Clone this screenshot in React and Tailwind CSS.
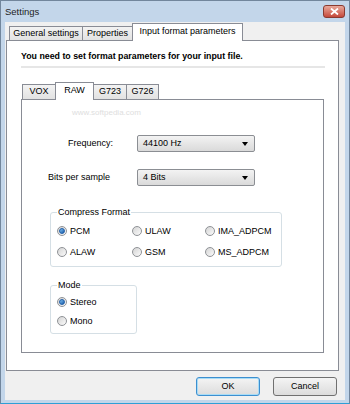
import React from 'react';

const Radio = ({ checked, label }) => (
  <div className="flex items-center h-[14px] gap-[3px]">
    <span className="w-[10px] h-[10px] rounded-full border border-[#8f9296] bg-gradient-to-br from-[#d4d4d4] to-[#fbfbfb] flex items-center justify-center">
      {checked && (
        <span className="w-[6px] h-[6px] rounded-full bg-gradient-to-br from-[#7fc2f2] to-[#185aa8] border border-[#1f5ea8]" />
      )}
    </span>
    <span>{label}</span>
  </div>
);

const Select = ({ value }) => (
  <div className="w-[118px] h-[17px] rounded-[2px] border border-[#8b8e93] bg-gradient-to-b from-[#f3f3f3] to-[#dadada] flex items-center justify-between pl-[5px] pr-[6px]">
    <span>{value}</span>
    <span className="w-0 h-0 border-l-[3.5px] border-r-[3.5px] border-t-[4px] border-l-transparent border-r-transparent border-t-black" />
  </div>
);

const Tab = ({ label, width, active, small }) => (
  <div
    className={`${width} -ml-[1px] first:ml-0 border border-[#898c95] border-b-0 flex items-start justify-center ${
      active
        ? 'bg-white h-[18px] relative z-10 -mb-[1px] pt-[2px]'
        : `bg-gradient-to-b from-[#f3f3f3] to-[#e2e2e2] ${small ? 'h-[15px]' : 'h-[14px]'} pt-[1px]`
    }`}
  >
    {label}
  </div>
);

const Button = ({ label, focused }) => (
  <div
    className={`w-[64px] h-[19px] rounded-[3px] border flex items-center justify-center bg-gradient-to-b from-[#f4f4f4] to-[#dcdcdc] ${
      focused ? 'border-[#3c8fd0] shadow-[inset_0_0_0_1px_#a8dcf6]' : 'border-[#707070]'
    }`}
  >
    {label}
  </div>
);

export default function App() {
  return (
    <div className="w-[350px] h-[404px] flex flex-col bg-[#c3d6ea] border border-[#72869c] border-b-[#2f9fd6] font-['Liberation_Sans',Arial,sans-serif] text-[9px] leading-[11px] text-black">
      {/* Title bar */}
      <div className="h-[21px] flex items-center justify-between pl-[4px] pr-[4px]">
        <span className="text-[9.5px] text-[#1e1e1e]">Settings</span>
        <div className="w-[22px] h-[13px] rounded-[3px] border border-[#8a3a30] bg-gradient-to-b from-[#e8a89c] to-[#c4473a] flex items-center justify-center">
          <svg width="9" height="7" viewBox="0 0 9 7">
            <path d="M1 0.5 L8 6.5 M8 0.5 L1 6.5" stroke="white" strokeWidth="1.8" />
          </svg>
        </div>
      </div>

      {/* Client area */}
      <div className="flex-1 mx-[4px] mb-[3px] bg-[#f0f0f0] flex flex-col pl-[1px] pr-[6px]">
        {/* Main tabs */}
        <div className="flex items-end pl-[3px] h-[18px]">
          <Tab label="General settings" width="w-[74px]" />
          <Tab label="Properties" width="w-[51px]" />
          <Tab label="Input format parameters" width="w-[111px]" active />
        </div>

        <div className="h-[331px] border border-[#898c95] bg-white flex flex-col pl-[14px] pt-[9px]">
          <div className="font-bold text-[8.8px] leading-[12px]">You need to set format parameters for your input file.</div>
          <div className="mt-[4px] w-[304px] h-[2px] bg-[#e6e6e6]" />

          {/* Inner tabs */}
          <div className="flex items-end pl-[1px] mt-[14px] h-[17px]">
            <Tab label="VOX" width="w-[34px]" small />
            <Tab label="RAW" width="w-[39px]" active />
            <Tab label="G723" width="w-[34px]" small />
            <Tab label="G726" width="w-[33px]" small />
          </div>

          <div className="w-[303px] h-[254px] border border-[#898c95] bg-white flex flex-col">
            <div className="pl-[50px] pt-[7px] text-[#dedede] text-[8px]">www.softpedia.com</div>

            <div className="grid grid-cols-[115px_118px] items-center gap-y-[17px] mt-[17px]">
              <span className="pl-[46px]">Frequency:</span>
              <Select value="44100 Hz" />
              <span className="pl-[26px]">Bits per sample</span>
              <Select value="4 Bits" />
            </div>

            <fieldset className="ml-[28px] mt-[21px] w-[232px] border border-[#d5dfe5] rounded-[3px] pl-[6px] pb-[7px]">
              <legend className="px-[1px] leading-[10px]">Compress Format</legend>
              <div className="grid grid-cols-[75px_73px_auto] gap-y-[7px] pt-[7px]">
                <Radio checked label="PCM" />
                <Radio label="ULAW" />
                <Radio label="IMA_ADPCM" />
                <Radio label="ALAW" />
                <Radio label="GSM" />
                <Radio label="MS_ADPCM" />
              </div>
            </fieldset>

            <fieldset className="ml-[28px] mt-[13px] w-[87px] border border-[#d5dfe5] rounded-[3px] pl-[6px] pb-[5px]">
              <legend className="px-[1px] leading-[10px]">Mode</legend>
              <div className="flex flex-col gap-[5px] pt-[5px]">
                <Radio checked label="Stereo" />
                <Radio label="Mono" />
              </div>
            </fieldset>
          </div>
        </div>

        {/* Buttons */}
        <div className="flex justify-end gap-[13px] mt-[6px] pr-[2px]">
          <Button label="OK" focused />
          <Button label="Cancel" />
        </div>
      </div>
    </div>
  );
}
